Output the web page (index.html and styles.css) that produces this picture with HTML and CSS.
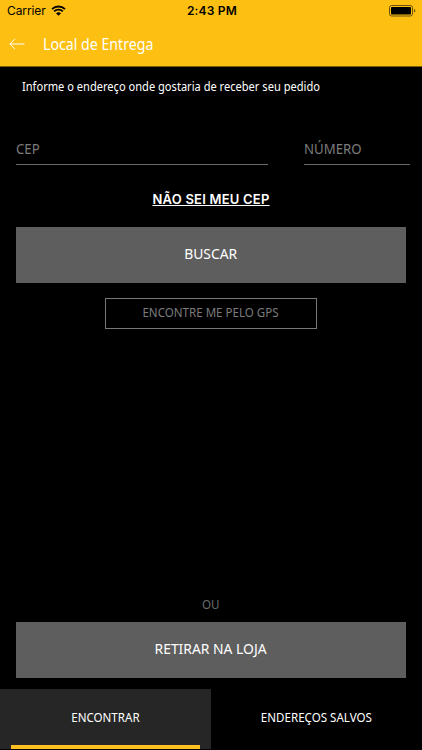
FILE: index.html
```html
<!DOCTYPE html>
<html lang="pt-BR">
<head>
    <meta charset="UTF-8">
    <meta name="viewport" content="width=device-width, initial-scale=1.0">
    <title>Local de Entrega</title>
    <link rel="stylesheet" href="styles.css">
</head>
<body>
    <!-- Header -->
    <header class="header">
        <div class="status-bar">
            <div class="carrier">
                <span>Carrier</span>
                <svg class="wifi" width="15" height="11" viewBox="0 0 15 11">
                    <path d="M1 4.1a9.4 9.4 0 0 1 13 0M3.2 6.4a6.2 6.2 0 0 1 8.6 0" fill="none" stroke="#000" stroke-width="1.9"/>
                    <path d="M5 8.3a3.7 3.7 0 0 1 5 0L7.5 10.8z" fill="#000"/>
                </svg>
            </div>
            <span class="time">2:43 PM</span>
            <div class="battery">
                <svg width="27" height="12" viewBox="0 0 27 12">
                    <rect x="0.5" y="0.5" width="23" height="10.5" rx="2.2" fill="none" stroke="#6b500c"/>
                    <rect x="2" y="2" width="20" height="7.5" rx="0.8" fill="#000"/>
                    <path d="M25 4q1.3 0.4 1.3 1.8t-1.3 1.8z" fill="#6b500c"/>
                </svg>
            </div>
        </div>
        <div class="nav-bar">
            <a href="#" class="back">
                <svg width="16" height="12" viewBox="0 0 16 12">
                    <path d="M15.5 6H0.8M6 0.8L0.8 6L6 11.2" fill="none" stroke="#fff" stroke-width="1"/>
                </svg>
            </a>
            <h1 class="title">Local de Entrega</h1>
        </div>
    </header>

    <!-- Address form -->
    <main class="content">
        <p class="intro">Informe o endereço onde gostaria de receber seu pedido</p>
        <form class="address-form">
            <div class="fields">
                <div class="field field-cep" contenteditable="true"><span class="placeholder">CEP</span></div>
                <div class="field field-number" contenteditable="true"><span class="placeholder">NÚMERO</span></div>
            </div>
            <a href="#" class="forgot-link">NÃO SEI MEU CEP</a>
            <button type="button" class="btn"><span class="btn-text">BUSCAR</span></button>
            <button type="button" class="btn-gps"><span class="narrow">ENCONTRE ME PELO GPS</span></button>
        </form>
        <div class="pickup">
            <span class="or narrow">OU</span>
            <button type="button" class="btn"><span class="btn-text">RETIRAR NA LOJA</span></button>
        </div>
    </main>

    <!-- Tabs -->
    <nav class="tabs">
        <a href="#" class="tab active"><span class="narrow">ENCONTRAR</span></a>
        <a href="#" class="tab"><span class="narrow">ENDEREÇOS SALVOS</span></a>
    </nav>
</body>
</html>
```
FILE: styles.css
```css
/* General styles */
* {
    box-sizing: border-box;
}

body {
    margin: 0;
    height: 750px;
    display: flex;
    flex-direction: column;
    background-color: #000;
    color: #fff;
    font-family: "Noto Sans", sans-serif;
    overflow: hidden;
}

a {
    color: inherit;
    text-decoration: none;
}

button {
    font-family: inherit;
    border-radius: 0;
}

/* Condensed lettering */
.narrow {
    display: inline-block;
    transform: scaleX(0.89);
}

/* Header */
.header {
    height: 67px;
    background-color: #fdbf12;
    border-bottom: 1px solid #7d5e0b;
}

.status-bar {
    height: 22px;
    padding: 0 6px 1px 7px;
    display: grid;
    grid-template-columns: 1fr auto 1fr;
    align-items: center;
    color: #000;
    font-family: Inter, sans-serif;
    font-size: 12px;
}

.carrier {
    display: flex;
    align-items: center;
    gap: 5px;
}

.carrier span {
    letter-spacing: -0.1px;
}

.time {
    padding-left: 1px;
    font-weight: 600;
    letter-spacing: 0.2px;
}

.battery {
    display: flex;
    justify-content: flex-end;
}

.nav-bar {
    height: 44px;
    padding-left: 9px;
    display: flex;
    align-items: center;
    gap: 18px;
}

.back {
    display: flex;
}

.title {
    margin: 0;
    font-size: 16px;
    font-weight: 400;
    line-height: 22px;
    transform: scaleX(0.885);
    transform-origin: left;
}

/* Content */
.content {
    flex: 1;
    display: flex;
    flex-direction: column;
    padding: 0 16px 11px;
}

.intro {
    margin: 9px 0 0 6px;
    font-size: 13px;
    line-height: 20px;
    white-space: nowrap;
    transform: scaleX(0.853);
    transform-origin: left;
}

.address-form {
    display: flex;
    flex-direction: column;
    align-items: center;
}

.fields {
    display: flex;
    width: 394px;
    align-self: flex-start;
    justify-content: space-between;
    margin-top: 37px;
}

.field {
    height: 32px;
    border-bottom: 1px solid #6a6a6a;
    font-size: 15px;
    line-height: 30px;
}

.placeholder {
    display: inline-block;
    color: #7c7c7c;
    transform: scaleX(0.88);
    transform-origin: left;
}

.field-cep {
    width: 252px;
}

.field-number {
    width: 106px;
}

.forgot-link {
    margin: 24px 0 18px;
    font-family: Inter, sans-serif;
    font-size: 13px;
    font-weight: 600;
    letter-spacing: 0.22px;
    line-height: 20px;
    text-decoration: underline;
}

.btn {
    width: 390px;
    height: 56px;
    padding: 0 0 4px;
    border: none;
    background-color: #5e5e5e;
    color: #fff;
    font-size: 15px;
}

.btn-text {
    display: inline-block;
    transform: scaleX(0.925);
}

.btn-gps {
    width: 212px;
    height: 31px;
    margin-top: 15px;
    padding: 0 0 3px;
    border: 1px solid #777;
    background: none;
    color: #7c7c7c;
    font-size: 13px;
}

.pickup {
    margin-top: auto;
    display: flex;
    flex-direction: column;
    align-items: center;
}

.or {
    margin-bottom: 8px;
    color: #6c6c6c;
    font-size: 13px;
    line-height: 20px;
}

/* Tabs */
.tabs {
    height: 61px;
    display: flex;
    padding-bottom: 1px;
}

.tab {
    flex: 1;
    display: flex;
    align-items: center;
    justify-content: center;
    padding-bottom: 4px;
    font-size: 13px;
}

.tab.active {
    position: relative;
    background-color: #262626;
}

.tab.active::after {
    content: "";
    position: absolute;
    left: 11px;
    right: 11px;
    bottom: 0;
    height: 4px;
    background-color: #fdbf22;
}
```
